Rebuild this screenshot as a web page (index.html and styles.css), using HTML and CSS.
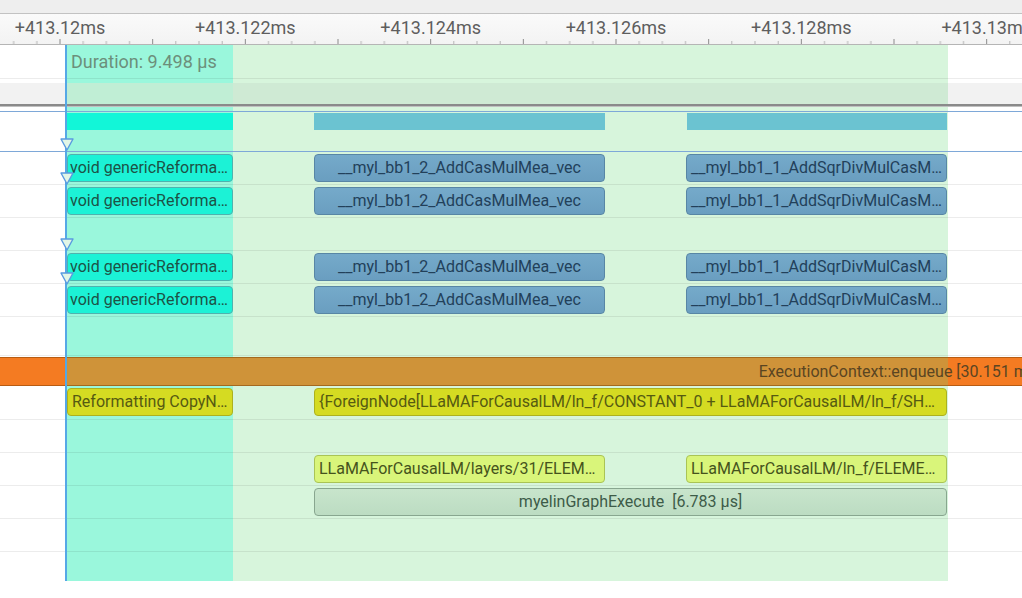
FILE: index.html
```html
<!DOCTYPE html>
<html>
<head>
<meta charset="utf-8">
<link rel="stylesheet" href="styles.css">
</head>
<body>
<div class="app">
  <div class="topbar"></div>
  <div class="ruler">
    <svg class="ticks" width="1022" height="30" viewBox="0 0 1022 30">
      <defs>
        <pattern id="tk" x="59.5" y="0" width="92.667" height="30" patternUnits="userSpaceOnUse">
          <rect x="0" y="25" width="1" height="5" fill="#8a8a8a"/>
          <rect x="23.17" y="27" width="1" height="3" fill="#b4b4b4"/>
          <rect x="46.33" y="27" width="1" height="3" fill="#b4b4b4"/>
          <rect x="69.5" y="27" width="1" height="3" fill="#b4b4b4"/>
        </pattern>
      </defs>
      <rect x="0" y="0" width="1022" height="30" fill="url(#tk)"/>
    </svg>
    <span class="tick-label" style="left:60px">+413.12ms</span>
    <span class="tick-label" style="left:245.3px">+413.122ms</span>
    <span class="tick-label" style="left:430.7px">+413.124ms</span>
    <span class="tick-label" style="left:616px">+413.126ms</span>
    <span class="tick-label" style="left:801.3px">+413.128ms</span>
    <span class="tick-label" style="left:986.7px">+413.13ms</span>
  </div>

  <div class="timeline">
    <div class="selection">
      <div class="sel-main"><span class="duration">Duration: 9.498 µs</span></div>
      <div class="sel-range"></div>
    </div>

    <div class="tracks">
      <div class="row row-dur"></div>
      <div class="gap"></div>
      <div class="band"></div>
      <div class="sep"></div>
      <div class="gap"></div>
      <div class="hline"></div>
      <div class="row-gpu">
        <div class="gbar gbar-cyan" style="left:66px;width:167px"></div>
        <div class="gbar gbar-teal" style="left:314px;width:291px"></div>
        <div class="gbar gbar-teal" style="left:687px;width:260px"></div>
      </div>
      <div class="hline"></div>

      <div class="row">
        <div class="ev ev-cyan" style="left:67px;width:166px">void genericReforma…</div>
        <div class="ev ev-blue" style="left:314px;width:291px">__myl_bb1_2_AddCasMulMea_vec</div>
        <div class="ev ev-blue ev-left" style="left:686px;width:261px">__myl_bb1_1_AddSqrDivMulCasM…</div>
      </div>
      <div class="row">
        <div class="ev ev-cyan" style="left:67px;width:166px">void genericReforma…</div>
        <div class="ev ev-blue" style="left:314px;width:291px">__myl_bb1_2_AddCasMulMea_vec</div>
        <div class="ev ev-blue ev-left" style="left:686px;width:261px">__myl_bb1_1_AddSqrDivMulCasM…</div>
      </div>
      <div class="row"></div>
      <div class="row">
        <div class="ev ev-cyan" style="left:67px;width:166px">void genericReforma…</div>
        <div class="ev ev-blue" style="left:314px;width:291px">__myl_bb1_2_AddCasMulMea_vec</div>
        <div class="ev ev-blue ev-left" style="left:686px;width:261px">__myl_bb1_1_AddSqrDivMulCasM…</div>
      </div>
      <div class="row">
        <div class="ev ev-cyan" style="left:67px;width:166px">void genericReforma…</div>
        <div class="ev ev-blue" style="left:314px;width:291px">__myl_bb1_2_AddCasMulMea_vec</div>
        <div class="ev ev-blue ev-left" style="left:686px;width:261px">__myl_bb1_1_AddSqrDivMulCasM…</div>
      </div>
      <div class="row row-tall"></div>

      <div class="row-orange">
        <div class="ev-orange" style="left:0;width:1799px">ExecutionContext::enqueue [30.151 ms]</div>
      </div>

      <div class="row row-yellow">
        <div class="ev ev-yellow ev-left" style="left:67px;width:166px">Reformatting CopyN…</div>
        <div class="ev ev-yellow ev-left" style="left:314px;width:633px">{ForeignNode[LLaMAForCausalLM/ln_f/CONSTANT_0 + LLaMAForCausalLM/ln_f/SH…</div>
      </div>
      <div class="row"></div>
      <div class="row">
        <div class="ev ev-lime ev-left" style="left:314px;width:291px">LLaMAForCausalLM/layers/31/ELEM…</div>
        <div class="ev ev-lime ev-left" style="left:686px;width:261px">LLaMAForCausalLM/ln_f/ELEME…</div>
      </div>
      <div class="row">
        <div class="ev ev-gray ev-pre" style="left:314px;width:633px">myelinGraphExecute  [6.783 µs]</div>
      </div>
      <div class="row"></div>
      <div class="row row-last"></div>
    </div>

    <div class="cursor"></div>
    <svg class="marker" style="top:93px" width="14" height="13" viewBox="0 0 14 13"><polygon points="1,1 13,1 7,12" /></svg>
    <svg class="marker" style="top:127px" width="14" height="13" viewBox="0 0 14 13"><polygon points="1,1 13,1 7,12" /></svg>
    <svg class="marker" style="top:193px" width="14" height="13" viewBox="0 0 14 13"><polygon points="1,1 13,1 7,12" /></svg>
    <svg class="marker" style="top:227px" width="14" height="13" viewBox="0 0 14 13"><polygon points="1,1 13,1 7,12" /></svg>
  </div>
</div>
</body>
</html>
```

FILE: styles.css
```css
html, body {
  margin: 0;
  padding: 0;
  background: #ffffff;
}

.app {
  width: 1022px;
  height: 598px;
  overflow: hidden;
  font-family: Roboto, "Liberation Sans", sans-serif;
  background: #ffffff;
}

.topbar {
  height: 13px;
  background: #eeeeee;
  border-bottom: 1px solid #c2c2c2;
}

.ruler {
  position: relative;
  height: 30px;
  background: linear-gradient(#fafafa, #f3f3f3);
  border-bottom: 1px solid #b5b5b5;
}

.ticks {
  position: absolute;
  left: 0;
  top: 0;
  display: block;
}

.tick-label {
  position: absolute;
  top: 5px;
  transform: translateX(-50%);
  font-size: 18px;
  line-height: 18px;
  color: #5e5e5e;
  white-space: nowrap;
}

.timeline {
  position: relative;
  height: 536px;
  overflow: hidden;
}

.selection {
  position: absolute;
  inset: 0;
  display: flex;
  padding-left: 66px;
  z-index: 0;
}

.sel-main {
  width: 167px;
  flex: none;
  background: #9af7dc;
  box-sizing: border-box;
  padding: 7px 0 0 5px;
}

.sel-range {
  width: 715px;
  flex: none;
  background: #d7f5dc;
}

.duration {
  display: block;
  font-size: 18px;
  line-height: 20px;
  color: #6c8f7b;
  white-space: nowrap;
}

.tracks {
  position: relative;
  z-index: 1;
}

.row {
  position: relative;
  height: 32px;
  border-bottom: 1px solid rgba(0, 0, 0, 0.075);
}

.row-dur {
  height: 33px;
}

.row-tall {
  height: 38px;
}

.row-yellow .ev {
  top: 1px;
}

.row-last {
  height: 29px;
  border-bottom: none;
}

.gap {
  height: 4px;
}

.band {
  height: 21px;
  background: linear-gradient(to right,
    #f2f2f2 0, #f2f2f2 66px,
    #c0eed5 66px, #c0eed5 233px,
    #cfead4 233px, #cfead4 948px,
    #f2f2f2 948px);
}

.sep {
  height: 2px;
  background: #8a8a8a;
  border-bottom: 1px solid #c0c0c0;
}

.hline {
  height: 1px;
  background: #7ea8d8;
}

.row-gpu {
  position: relative;
  height: 39px;
}

.gbar {
  position: absolute;
  top: 1px;
  height: 17px;
}

.gbar-cyan {
  background: #12f6d8;
}

.gbar-teal {
  background: #6bc3d1;
}

.ev {
  position: absolute;
  top: 2px;
  height: 28px;
  box-sizing: border-box;
  border: 1px solid;
  border-radius: 4px;
  padding: 0 4px;
  font-size: 16px;
  line-height: 26px;
  white-space: nowrap;
  overflow: hidden;
  text-overflow: ellipsis;
  text-align: center;
}

.ev-left {
  text-align: left;
}

.ev-pre {
  white-space: pre;
}

.ev-cyan {
  background: #1cf2d6;
  border-color: #4fb2ae;
  color: #1d5246;
  text-align: left;
  padding-left: 2px;
}

.ev-blue {
  background: linear-gradient(#75aaca, #6a9ec0);
  border-color: #5886a5;
  color: #22405a;
}

.ev-yellow {
  background: #d5db22;
  border-color: #adb11e;
  color: #555a12;
}

.ev-lime {
  background: #d9f57a;
  border-color: #aac455;
  color: #45531d;
}

.ev-gray {
  background: linear-gradient(#c8e5cc, #bcdcc2);
  border-color: #88a68f;
  color: #3d5b48;
}

.row-orange {
  position: relative;
  height: 31px;
}

.ev-orange {
  position: absolute;
  top: 1px;
  height: 29px;
  box-sizing: border-box;
  border-top: 1px solid rgba(110, 55, 0, 0.45);
  border-bottom: 1px solid rgba(110, 55, 0, 0.45);
  background: linear-gradient(to right,
    #f47b22 0, #f47b22 66px,
    #cf9339 66px, #cf9339 948px,
    #f47b22 948px);
  font-size: 16px;
  line-height: 27px;
  color: #5a4522;
  text-align: center;
  white-space: nowrap;
}

.cursor {
  position: absolute;
  left: 65px;
  top: 0;
  width: 2px;
  height: 536px;
  background: #55a8e6;
  z-index: 3;
}

.marker {
  position: absolute;
  left: 60px;
  display: block;
  z-index: 4;
}

.marker polygon {
  fill: #e2f6e6;
  stroke: #5a9be0;
  stroke-width: 1.4;
  stroke-linejoin: round;
}
```
